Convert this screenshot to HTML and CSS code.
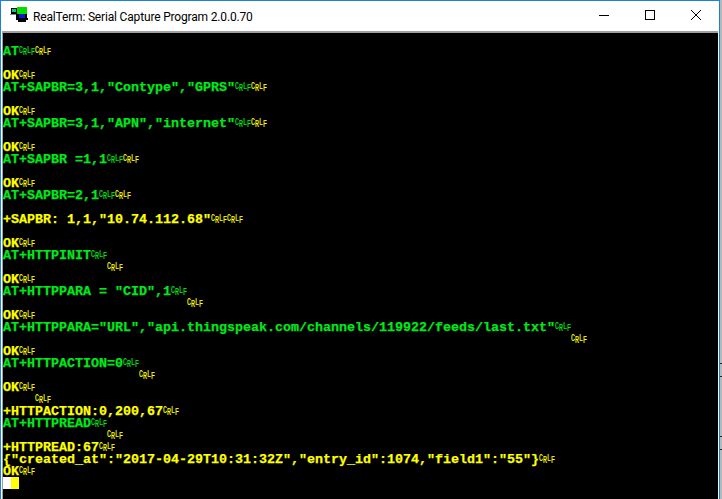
FILE: index.html
```html
<!DOCTYPE html>
<html lang="en">
<head>
<meta charset="utf-8">
<title>RealTerm: Serial Capture Program 2.0.0.70</title>
<link rel="stylesheet" href="styles.css">
</head>
<body>
<div class="window">
  <header class="titlebar">
    <svg class="app-icon" width="20" height="16" viewBox="0 0 20 16">
      <rect x="2" y="1" width="7" height="6" fill="#000"/>
      <rect x="3" y="2" width="4" height="3" fill="#00c890"/>
      <rect x="1" y="7" width="7" height="1" fill="#888"/>
      <rect x="8" y="0" width="10" height="7" fill="#00e000"/>
      <rect x="7" y="7" width="11" height="6" fill="#000"/>
      <rect x="10" y="7" width="6" height="5" fill="#0020d0"/>
      <rect x="7" y="11" width="12" height="2" fill="#000"/>
      <rect x="9" y="13" width="8" height="2" fill="#000"/>
    </svg>
    <span class="title">RealTerm: Serial Capture Program 2.0.0.70</span>
    <div class="controls">
      <span class="ctl"><svg width="10" height="10" viewBox="0 0 10 10"><path d="M0 5.5h10" stroke="#000"/></svg></span>
      <span class="ctl"><svg width="10" height="10" viewBox="0 0 10 10"><rect x=".5" y=".5" width="9" height="9" fill="none" stroke="#000"/></svg></span>
      <span class="ctl"><svg width="10" height="10" viewBox="0 0 10 10"><path d="M0 0l10 10M10 0L0 10" stroke="#000" fill="none"/></svg></span>
    </div>
  </header>
  <main class="term">
    <div class="row"></div>
    <div class="row g">AT<b class="k">C<i>R</i></b><b class="k">L<i>F</i></b><b class="k y">C<i>R</i></b><b class="k y">L<i>F</i></b></div>
    <div class="row"></div>
    <div class="row y">OK<b class="k">C<i>R</i></b><b class="k">L<i>F</i></b></div>
    <div class="row g">AT+SAPBR=3,1,"Contype","GPRS"<b class="k">C<i>R</i></b><b class="k">L<i>F</i></b><b class="k y">C<i>R</i></b><b class="k y">L<i>F</i></b></div>
    <div class="row"></div>
    <div class="row y">OK<b class="k">C<i>R</i></b><b class="k">L<i>F</i></b></div>
    <div class="row g">AT+SAPBR=3,1,"APN","internet"<b class="k">C<i>R</i></b><b class="k">L<i>F</i></b><b class="k y">C<i>R</i></b><b class="k y">L<i>F</i></b></div>
    <div class="row"></div>
    <div class="row y">OK<b class="k">C<i>R</i></b><b class="k">L<i>F</i></b></div>
    <div class="row g">AT+SAPBR =1,1<b class="k">C<i>R</i></b><b class="k">L<i>F</i></b><b class="k y">C<i>R</i></b><b class="k y">L<i>F</i></b></div>
    <div class="row"></div>
    <div class="row y">OK<b class="k">C<i>R</i></b><b class="k">L<i>F</i></b></div>
    <div class="row g">AT+SAPBR=2,1<b class="k">C<i>R</i></b><b class="k">L<i>F</i></b><b class="k y">C<i>R</i></b><b class="k y">L<i>F</i></b></div>
    <div class="row"></div>
    <div class="row y">+SAPBR: 1,1,"10.74.112.68"<b class="k">C<i>R</i></b><b class="k">L<i>F</i></b><b class="k">C<i>R</i></b><b class="k">L<i>F</i></b></div>
    <div class="row"></div>
    <div class="row y">OK<b class="k">C<i>R</i></b><b class="k">L<i>F</i></b></div>
    <div class="row g">AT+HTTPINIT<b class="k">C<i>R</i></b><b class="k">L<i>F</i></b></div>
    <div class="row y pad-13"><b class="k">C<i>R</i></b><b class="k">L<i>F</i></b></div>
    <div class="row y">OK<b class="k">C<i>R</i></b><b class="k">L<i>F</i></b></div>
    <div class="row g">AT+HTTPPARA = "CID",1<b class="k">C<i>R</i></b><b class="k">L<i>F</i></b></div>
    <div class="row y pad-23"><b class="k">C<i>R</i></b><b class="k">L<i>F</i></b></div>
    <div class="row y">OK<b class="k">C<i>R</i></b><b class="k">L<i>F</i></b></div>
    <div class="row g">AT+HTTPPARA="URL","api.thingspeak.com/channels/119922/feeds/last.txt"<b class="k">C<i>R</i></b><b class="k">L<i>F</i></b></div>
    <div class="row y pad-71"><b class="k">C<i>R</i></b><b class="k">L<i>F</i></b></div>
    <div class="row y">OK<b class="k">C<i>R</i></b><b class="k">L<i>F</i></b></div>
    <div class="row g">AT+HTTPACTION=0<b class="k">C<i>R</i></b><b class="k">L<i>F</i></b></div>
    <div class="row y pad-17"><b class="k">C<i>R</i></b><b class="k">L<i>F</i></b></div>
    <div class="row y">OK<b class="k">C<i>R</i></b><b class="k">L<i>F</i></b></div>
    <div class="row y pad-4"><b class="k">C<i>R</i></b><b class="k">L<i>F</i></b></div>
    <div class="row y">+HTTPACTION:0,200,67<b class="k">C<i>R</i></b><b class="k">L<i>F</i></b></div>
    <div class="row g">AT+HTTPREAD<b class="k">C<i>R</i></b><b class="k">L<i>F</i></b></div>
    <div class="row y pad-13b"><b class="k">C<i>R</i></b><b class="k">L<i>F</i></b></div>
    <div class="row y">+HTTPREAD:67<b class="k">C<i>R</i></b><b class="k">L<i>F</i></b></div>
    <div class="row y">{"created_at":"2017-04-29T10:31:32Z","entry_id":1074,"field1":"55"}<b class="k">C<i>R</i></b><b class="k">L<i>F</i></b></div>
    <div class="row y">OK<b class="k">C<i>R</i></b><b class="k">L<i>F</i></b></div>
    <div class="row cursor"><span class="cur-w"></span><span class="cur-y"></span></div>
  </main>
</div>
<div class="desktop"></div>
</body>
</html>
```
FILE: styles.css
```css
* { box-sizing: border-box; }
html, body { margin: 0; height: 100%; overflow: hidden; }
body { display: flex; width: 722px; height: 499px; background: #b8b8b8; }
.window {
  width: 720px;
  height: 499px;
  display: flex;
  flex-direction: column;
  background: #fff;
  border: 1px solid #1883d7;
  border-bottom: 0;
  overflow: hidden;
}
.desktop {
  width: 2px;
  height: 499px;
  background:
    linear-gradient(#222, #222) 0 363px / 2px 1px no-repeat,
    linear-gradient(#222, #222) 0 376px / 2px 1px no-repeat,
    linear-gradient(#222, #222) 0 436px / 2px 1px no-repeat,
    linear-gradient(#222, #222) 0 449px / 2px 1px no-repeat,
    #b4b8b8;
}
.titlebar {
  height: 30px;
  flex: none;
  display: flex;
  align-items: center;
  padding-left: 8px;
  color: #000;
}
.app-icon { margin-right: 4px; margin-top: -2px; flex: none; }
.title { white-space: nowrap; font: 12px Roboto, sans-serif; letter-spacing: -0.17px; padding-top: 1px; }
.controls { margin-left: auto; display: flex; height: 100%; }
.ctl { width: 46px; display: flex; align-items: center; justify-content: center; padding-bottom: 2px; }
.term {
  flex: 1;
  min-height: 0;
  margin: 0 1px;
  background: #000;
  border-top: 2px solid #a0a0a0;
  border-left: 1px solid #a0a0a0;
  font: bold 13.34px/12px "Liberation Mono", monospace;
  -webkit-text-stroke: 0.25px currentColor;
  overflow: hidden;
}
.row { height: 12px; white-space: pre; padding-top: 1px; }
.g { color: #00e81c; }
.y { color: #ffff00; }
.k {
  display: inline-block;
  width: 12px;
  margin-right: -4px;
  height: 11px;
  vertical-align: top;
  overflow: visible;
  font: normal 10px/9px "Liberation Mono", monospace;
  -webkit-text-stroke: 0.2px currentColor;
  white-space: nowrap;
  transform: scaleX(.667);
  transform-origin: left top;
}
.k i { font-style: normal; display: inline-block; height: 9px; vertical-align: top; margin-top: 2px; }
.g .k { color: #00e81c; }
.k.y, .y .k { color: #ffff00; }
.pad-4 { padding-left: 32px; }
.pad-13 { padding-left: 104px; }
.pad-13b { padding-left: 104px; }
.pad-17 { padding-left: 136px; }
.pad-23 { padding-left: 184px; }
.pad-71 { padding-left: 568px; }
.cursor { display: flex; padding-top: 0; }
.cur-w { width: 8px; height: 12px; background: #fff; }
.cur-y { width: 8px; height: 12px; background: #ffff00; }
```
